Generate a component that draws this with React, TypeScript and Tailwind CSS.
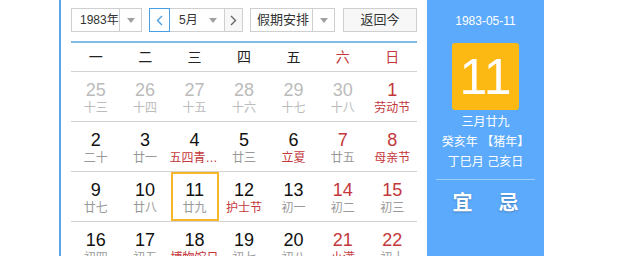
type Day = { n: number; l: string; other?: boolean; red?: boolean; lred?: boolean; sel?: boolean };

const weeks: Day[][] = [
  [
    { n: 25, l: "十三", other: true },
    { n: 26, l: "十四", other: true },
    { n: 27, l: "十五", other: true },
    { n: 28, l: "十六", other: true },
    { n: 29, l: "十七", other: true },
    { n: 30, l: "十八", other: true },
    { n: 1, l: "劳动节", red: true, lred: true },
  ],
  [
    { n: 2, l: "二十" },
    { n: 3, l: "廿一" },
    { n: 4, l: "五四青年节", lred: true },
    { n: 5, l: "廿三" },
    { n: 6, l: "立夏", lred: true },
    { n: 7, l: "廿五", red: true },
    { n: 8, l: "母亲节", red: true, lred: true },
  ],
  [
    { n: 9, l: "廿七" },
    { n: 10, l: "廿八" },
    { n: 11, l: "廿九", sel: true },
    { n: 12, l: "护士节", lred: true },
    { n: 13, l: "初一" },
    { n: 14, l: "初二", red: true },
    { n: 15, l: "初三", red: true },
  ],
  [
    { n: 16, l: "初四" },
    { n: 17, l: "初五" },
    { n: 18, l: "博物馆日", lred: true },
    { n: 19, l: "初七" },
    { n: 20, l: "初八" },
    { n: 21, l: "小满", red: true, lred: true },
    { n: 22, l: "初十", red: true },
  ],
];

const heads = ["一", "二", "三", "四", "五", "六", "日"];

function Caret() {
  return (
    <svg width="8" height="5" viewBox="0 0 8 5">
      <path d="M0 0h8L4 5z" fill="#a0a0a0" />
    </svg>
  );
}

function Chevron({ dir, color }: { dir: "l" | "r"; color: string }) {
  return (
    <svg width="7" height="11" viewBox="0 0 7 11">
      <path
        d={dir === "l" ? "M6 1 1.5 5.5 6 10" : "M1 1 5.5 5.5 1 10"}
        fill="none"
        stroke={color}
        strokeWidth="1.4"
      />
    </svg>
  );
}

export default function App() {
  return (
    <div
      className="w-[640px] h-[256px] overflow-hidden bg-white flex"
      style={{ fontFamily: '"Liberation Sans", "Noto Sans CJK SC", sans-serif' }}
    >
      <div className="ml-[59px] w-[2px] bg-[#5ea6e8]" />
      <div className="w-[366px] px-[10px] pt-[8px]">
        {/* toolbar */}
        <div className="flex h-[24px] text-[13px] text-[#333] whitespace-nowrap">
          <div className="w-[71px] flex border border-[#cfcfcf]">
            <div className="flex-1 flex items-center pl-[8px] text-[12px]">1983年</div>
            <div className="w-[22px] border-l border-[#cfcfcf] flex items-center justify-center">
              <Caret />
            </div>
          </div>
          <div className="ml-[7px] w-[94px] flex">
            <div className="w-[21px] border border-[#4a9fe3] flex items-center justify-center">
              <Chevron dir="l" color="#4a9fe3" />
            </div>
            <div className="flex-1 flex items-center border-y border-[#cfcfcf] pl-[9px] pr-[7px] text-[12px]">
              <span className="flex-1">5月</span>
              <Caret />
            </div>
            <div className="w-[19px] border border-[#cfcfcf] bg-[#f7f7f7] flex items-center justify-center">
              <Chevron dir="r" color="#666" />
            </div>
          </div>
          <div className="ml-[7px] w-[85px] flex border border-[#cfcfcf]">
            <div className="flex-1 flex items-center pl-[6px]">假期安排</div>
            <div className="w-[22px] border-l border-[#cfcfcf] flex items-center justify-center">
              <Caret />
            </div>
          </div>
          <div className="ml-[8px] w-[74px] border border-[#cfcfcf] bg-[#f7f7f7] flex items-center justify-center">
            返回今
          </div>
        </div>

        <div className="mt-[9px] h-[2px] bg-[#7fbde6]" />

        {/* weekday header */}
        <div className="grid grid-cols-7 h-[29px] border-b border-[#d2d2d2] items-center text-[14px]">
          {heads.map((h, i) => (
            <div key={h} className={`text-center ${i >= 5 ? "text-[#c4373b]" : "text-[#222]"}`}>
              {h}
            </div>
          ))}
        </div>

        {weeks.map((w, wi) => (
          <div key={wi} className="grid grid-cols-7 h-[50px] border-b border-[#d2d2d2]">
            {w.map((d, di) => (
              <div key={di} className="flex justify-center">
                <div
                  className={`w-[48px] h-[49px] flex flex-col items-center border-2 ${
                    d.sel ? "border-[#f5b82a]" : "border-transparent"
                  }`}
                >
                  <div
                    className={`mt-[6px] text-[18px] leading-[20px] ${
                      d.other ? "text-[#bbb]" : d.red ? "text-[#c4373b]" : "text-[#111]"
                    }`}
                  >
                    {d.n}
                  </div>
                  <div
                    className={`w-[50px] shrink-0 text-center text-[12px] leading-[16px] whitespace-nowrap overflow-hidden text-ellipsis ${
                      d.other ? "text-[#bbb]" : d.lred ? "text-[#c4373b]" : "text-[#999]"
                    }`}
                  >
                    {d.l}
                  </div>
                </div>
              </div>
            ))}
          </div>
        ))}
      </div>

      {/* right info panel */}
      <div className="w-[117px] bg-[#5caafc] flex flex-col items-center text-white">
        <div className="mt-[13px] text-[12px] leading-[16px]">1983-05-11</div>
        <div className="mt-[14px] w-[67px] h-[67px] rounded-[3px] bg-[#fcb813] flex items-center justify-center text-[50px] leading-none">
          11
        </div>
        <div className="mt-[2px] text-[12px] leading-[20px]">三月廿九</div>
        <div className="text-[12px] leading-[20px]">癸亥年 【猪年】</div>
        <div className="text-[12px] leading-[20px]">丁巳月 己亥日</div>
        <div className="mt-[7px] w-[99px] h-px bg-white/40" />
        <div className="mt-[11px] flex gap-[26px] text-[20px] leading-[24px] font-bold [text-shadow:0_1px_2px_rgba(0,0,0,0.25)]">
          <span>宜</span>
          <span>忌</span>
        </div>
      </div>
    </div>
  );
}
